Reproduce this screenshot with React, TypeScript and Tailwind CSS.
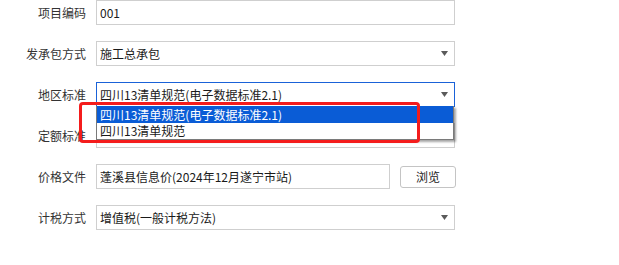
import React from "react";

const font = { fontFamily: '"Noto Sans CJK SC", "Microsoft YaHei", sans-serif' };

function Arrow() {
  return (
    <svg width="7" height="5" viewBox="0 0 7 5" className="shrink-0">
      <polygon points="0,0 7,0 3.5,5" fill="#5a5a5a" />
    </svg>
  );
}

function Row({ label, children }: { label: string; children: React.ReactNode }) {
  return (
    <div className="flex h-[25px] items-center">
      <div className="w-[86px] shrink-0 text-right text-[12px] leading-none text-[#333]">{label}</div>
      <div className="ml-[10px] flex h-full items-center">{children}</div>
    </div>
  );
}

function Box({ text, select, focus, width = 359 }: { text: string; select?: boolean; focus?: boolean; width?: number }) {
  return (
    <div
      className={`flex h-[25px] items-center justify-between border bg-white pl-[3px] pr-[6px] text-[12px] leading-none text-[#1a1a1a] ${
        focus ? "border-[#1a62d8]" : "border-[#cfcfcf]"
      }`}
      style={{ width }}
    >
      <span className="whitespace-nowrap">{text}</span>
      {select && <Arrow />}
    </div>
  );
}

export default function App() {
  return (
    <div className="relative h-[265px] w-[619px] overflow-hidden bg-white" style={font}>
      <div className="flex flex-col gap-[16px]">
        <Row label="项目编码">
          <Box text="001" />
        </Row>
        <Row label="发承包方式">
          <Box text="施工总承包" select />
        </Row>
        <Row label="地区标准">
          <Box text="四川13清单规范(电子数据标准2.1)" select focus />
        </Row>
        <Row label="定额标准">
          <Box text="四川省2020序列定额" select />
        </Row>
        <Row label="价格文件">
          <div className="flex items-center gap-[10px]">
            <Box text="蓬溪县信息价(2024年12月遂宁市站)" width={294} />
            <button className="flex h-[22px] w-[56px] items-center justify-center rounded-[3px] border border-[#c4c4c4] bg-white text-[12px] leading-none text-[#222]">
              浏览
            </button>
          </div>
        </Row>
        <Row label="计税方式">
          <Box text="增值税(一般计税方法)" select />
        </Row>
      </div>

      {/* dropdown list */}
      <div className="absolute left-[96px] top-[106px] flex w-[358px] flex-col border border-t-0 border-[#7a7a7a] bg-white text-[12px] leading-none shadow-[2px_2px_2px_rgba(0,0,0,0.35)]">
        <div className="flex h-[17px] items-center bg-[#0a5cd6] pl-[3px] text-white">四川13清单规范(电子数据标准2.1)</div>
        <div className="flex h-[16px] items-center pl-[3px] text-[#1a1a1a]">四川13清单规范</div>
      </div>

      {/* red highlight */}
      <div className="absolute left-[79px] top-[102px] h-[41px] w-[341px] rounded-[4px] border-[3px] border-[#f41c1c]" />
    </div>
  );
}
